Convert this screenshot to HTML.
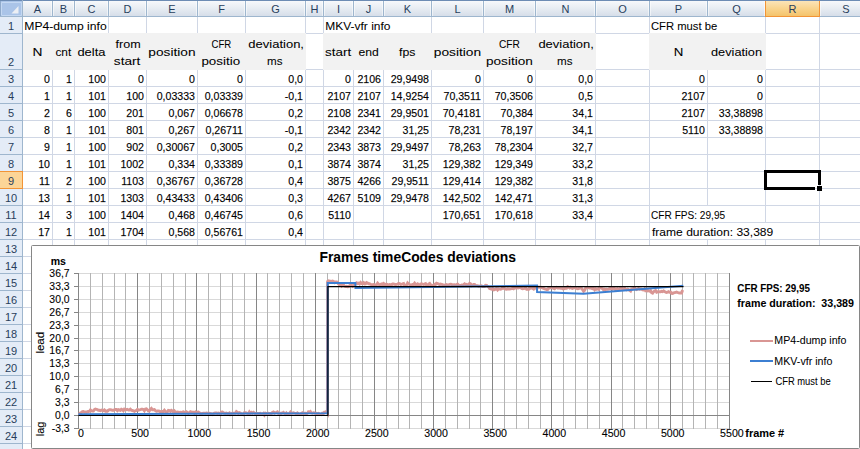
<!DOCTYPE html><html><head><meta charset="utf-8"><style>html,body{margin:0;padding:0;width:860px;height:449px;overflow:hidden;background:#fff}</style></head><body><svg width="860" height="449" viewBox="0 0 860 449" style="position:absolute;left:0;top:0"><defs><linearGradient id="ch" x1="0" y1="0" x2="0" y2="1"><stop offset="0" stop-color="#f9fafc"/><stop offset="0.5" stop-color="#e8edf3"/><stop offset="1" stop-color="#d6dee9"/></linearGradient><linearGradient id="chs" x1="0" y1="0" x2="0" y2="1"><stop offset="0" stop-color="#fbe4b8"/><stop offset="0.5" stop-color="#f9d48e"/><stop offset="1" stop-color="#f4c36b"/></linearGradient></defs><rect x="0" y="0" width="860" height="449" fill="#ffffff"/><rect x="22" y="34" width="283" height="36" fill="#f2f2f2"/><rect x="323" y="34" width="272" height="36" fill="#f2f2f2"/><rect x="649" y="34" width="116" height="36" fill="#f2f2f2"/><path d="M52.5 33V449M74.5 33V449M108.5 17V449M146.5 17V449M197.5 17V449M245.5 17V449M305.5 17V449M323.5 17V449M353.5 33V449M383.5 33V449M431.5 17V449M483.5 17V449M535.5 17V449M595.5 17V449M649.5 17V449M707.5 33V206M707.5 222V223M707.5 239V449M765.5 17V223M765.5 239V449M819.5 17V449M872.5 17V449M23 33.5H860M23 69.5H860M23 86.5H860M23 103.5H860M23 120.5H860M23 137.5H860M23 154.5H860M23 171.5H860M23 188.5H860M23 205.5H860M23 222.5H860M23 239.5H860M23 256.5H860M23 273.5H860M23 290.5H860M23 307.5H860M23 324.5H860M23 341.5H860M23 358.5H860M23 375.5H860M23 392.5H860M23 409.5H860M23 426.5H860M23 443.5H860M23 460.5H860M23 477.5H860" stroke="#d0d7e5" stroke-width="1" fill="none"/><rect x="23" y="33" width="283" height="37" fill="#f2f2f2"/><rect x="323" y="33" width="273" height="37" fill="#f2f2f2"/><rect x="649" y="33" width="117" height="37" fill="#f2f2f2"/><rect x="0" y="0" width="860" height="16" fill="url(#ch)"/><rect x="0" y="16" width="860" height="1" fill="#9eb6ce"/><path d="M52.5 1V16M74.5 1V16M108.5 1V16M146.5 1V16M197.5 1V16M245.5 1V16M305.5 1V16M323.5 1V16M353.5 1V16M383.5 1V16M431.5 1V16M483.5 1V16M535.5 1V16M595.5 1V16M649.5 1V16M707.5 1V16M765.5 1V16M819.5 1V16M872.5 1V16" stroke="#9eb6ce" stroke-width="1"/><path d="M51.5 1V16M53.5 1V16M73.5 1V16M75.5 1V16M107.5 1V16M109.5 1V16M145.5 1V16M147.5 1V16M196.5 1V16M198.5 1V16M244.5 1V16M246.5 1V16M304.5 1V16M306.5 1V16M322.5 1V16M324.5 1V16M352.5 1V16M354.5 1V16M382.5 1V16M384.5 1V16M430.5 1V16M432.5 1V16M482.5 1V16M484.5 1V16M534.5 1V16M536.5 1V16M594.5 1V16M596.5 1V16M648.5 1V16M650.5 1V16M706.5 1V16M708.5 1V16M764.5 1V16M766.5 1V16M818.5 1V16M820.5 1V16M871.5 1V16M873.5 1V16" stroke="#ffffff" stroke-opacity="0.55" stroke-width="1"/><rect x="765" y="1" width="55" height="16" fill="#f29436"/><rect x="766" y="1" width="53" height="15" fill="url(#chs)"/><rect x="0" y="0" width="860" height="1" fill="#6d8cb4"/><rect x="0" y="17" width="22" height="432" fill="#e4ecf7"/><rect x="22" y="0" width="1" height="449" fill="#9eb6ce"/><path d="M0 33.5H22M0 69.5H22M0 86.5H22M0 103.5H22M0 120.5H22M0 137.5H22M0 154.5H22M0 171.5H22M0 188.5H22M0 205.5H22M0 222.5H22M0 239.5H22M0 256.5H22M0 273.5H22M0 290.5H22M0 307.5H22M0 324.5H22M0 341.5H22M0 358.5H22M0 375.5H22M0 392.5H22M0 409.5H22M0 426.5H22M0 443.5H22M0 460.5H22M0 477.5H22" stroke="#9eb6ce" stroke-width="1"/><rect x="0" y="171" width="23" height="18" fill="#f29436"/><rect x="0" y="172" width="22" height="16" fill="#fcd597"/><rect x="0" y="1" width="22" height="15" fill="#aac4e8"/><path d="M1.5 15V2.5H21.5V15.5H1.5" fill="none" stroke="#c4d8f2" stroke-width="1"/><rect x="0" y="1" width="1" height="15" fill="#8faacb"/><path d="M18.5 6V13.5H11.5Z" fill="#eceff4"/><g font-family='"Liberation Sans", sans-serif'><text x="37.5" y="13" text-anchor="middle" font-size="11" font-weight="normal" fill="#283e5c" >A</text><text x="63.5" y="13" text-anchor="middle" font-size="11" font-weight="normal" fill="#283e5c" >B</text><text x="91.5" y="13" text-anchor="middle" font-size="11" font-weight="normal" fill="#283e5c" >C</text><text x="127.5" y="13" text-anchor="middle" font-size="11" font-weight="normal" fill="#283e5c" >D</text><text x="172.0" y="13" text-anchor="middle" font-size="11" font-weight="normal" fill="#283e5c" >E</text><text x="221.5" y="13" text-anchor="middle" font-size="11" font-weight="normal" fill="#283e5c" >F</text><text x="275.5" y="13" text-anchor="middle" font-size="11" font-weight="normal" fill="#283e5c" >G</text><text x="314.5" y="13" text-anchor="middle" font-size="11" font-weight="normal" fill="#283e5c" >H</text><text x="338.5" y="13" text-anchor="middle" font-size="11" font-weight="normal" fill="#283e5c" >I</text><text x="368.5" y="13" text-anchor="middle" font-size="11" font-weight="normal" fill="#283e5c" >J</text><text x="407.5" y="13" text-anchor="middle" font-size="11" font-weight="normal" fill="#283e5c" >K</text><text x="457.5" y="13" text-anchor="middle" font-size="11" font-weight="normal" fill="#283e5c" >L</text><text x="509.5" y="13" text-anchor="middle" font-size="11" font-weight="normal" fill="#283e5c" >M</text><text x="565.5" y="13" text-anchor="middle" font-size="11" font-weight="normal" fill="#283e5c" >N</text><text x="622.5" y="13" text-anchor="middle" font-size="11" font-weight="normal" fill="#283e5c" >O</text><text x="678.5" y="13" text-anchor="middle" font-size="11" font-weight="normal" fill="#283e5c" >P</text><text x="736.5" y="13" text-anchor="middle" font-size="11" font-weight="normal" fill="#283e5c" >Q</text><text x="792.5" y="13" text-anchor="middle" font-size="11" font-weight="normal" fill="#283e5c" >R</text><text x="846.0" y="13" text-anchor="middle" font-size="11" font-weight="normal" fill="#283e5c" >S</text><text x="11" y="30" text-anchor="middle" font-size="11" font-weight="normal" fill="#283e5c" >1</text><text x="11" y="66" text-anchor="middle" font-size="11" font-weight="normal" fill="#283e5c" >2</text><text x="11" y="83" text-anchor="middle" font-size="11" font-weight="normal" fill="#283e5c" >3</text><text x="11" y="100" text-anchor="middle" font-size="11" font-weight="normal" fill="#283e5c" >4</text><text x="11" y="117" text-anchor="middle" font-size="11" font-weight="normal" fill="#283e5c" >5</text><text x="11" y="134" text-anchor="middle" font-size="11" font-weight="normal" fill="#283e5c" >6</text><text x="11" y="151" text-anchor="middle" font-size="11" font-weight="normal" fill="#283e5c" >7</text><text x="11" y="168" text-anchor="middle" font-size="11" font-weight="normal" fill="#283e5c" >8</text><text x="11" y="185" text-anchor="middle" font-size="11" font-weight="normal" fill="#283e5c" >9</text><text x="11" y="202" text-anchor="middle" font-size="11" font-weight="normal" fill="#283e5c" >10</text><text x="11" y="219" text-anchor="middle" font-size="11" font-weight="normal" fill="#283e5c" >11</text><text x="11" y="236" text-anchor="middle" font-size="11" font-weight="normal" fill="#283e5c" >12</text><text x="11" y="253" text-anchor="middle" font-size="11" font-weight="normal" fill="#283e5c" >13</text><text x="11" y="270" text-anchor="middle" font-size="11" font-weight="normal" fill="#283e5c" >14</text><text x="11" y="287" text-anchor="middle" font-size="11" font-weight="normal" fill="#283e5c" >15</text><text x="11" y="304" text-anchor="middle" font-size="11" font-weight="normal" fill="#283e5c" >16</text><text x="11" y="321" text-anchor="middle" font-size="11" font-weight="normal" fill="#283e5c" >17</text><text x="11" y="338" text-anchor="middle" font-size="11" font-weight="normal" fill="#283e5c" >18</text><text x="11" y="355" text-anchor="middle" font-size="11" font-weight="normal" fill="#283e5c" >19</text><text x="11" y="372" text-anchor="middle" font-size="11" font-weight="normal" fill="#283e5c" >20</text><text x="11" y="389" text-anchor="middle" font-size="11" font-weight="normal" fill="#283e5c" >21</text><text x="11" y="406" text-anchor="middle" font-size="11" font-weight="normal" fill="#283e5c" >22</text><text x="11" y="423" text-anchor="middle" font-size="11" font-weight="normal" fill="#283e5c" >23</text><text x="11" y="440" text-anchor="middle" font-size="11" font-weight="normal" fill="#283e5c" >24</text><text x="11" y="457" text-anchor="middle" font-size="11" font-weight="normal" fill="#283e5c" >25</text></g><g font-family='"Liberation Sans", sans-serif' stroke="#000" stroke-width="0.25" stroke-opacity="0.6"><text x="24.30" y="30" text-anchor="start" font-size="11" font-weight="normal" fill="#000" stroke-width="0.1" textLength="82.36" lengthAdjust="spacingAndGlyphs" xml:space="preserve">MP4-dump info</text><text x="325.31" y="30" text-anchor="start" font-size="11" font-weight="normal" fill="#000" stroke-width="0.1" textLength="65.19" lengthAdjust="spacingAndGlyphs" xml:space="preserve">MKV-vfr info</text><text x="650.98" y="30" text-anchor="start" font-size="11" font-weight="normal" fill="#000" stroke-width="0.1" textLength="66.21" lengthAdjust="spacingAndGlyphs" xml:space="preserve">CFR must be</text><text x="37.47" y="56" text-anchor="middle" font-size="11" font-weight="normal" fill="#000" stroke-width="0.1" textLength="9.94" lengthAdjust="spacingAndGlyphs" xml:space="preserve">N</text><text x="63.33" y="56" text-anchor="middle" font-size="11" font-weight="normal" fill="#000" stroke-width="0.1" textLength="15.86" lengthAdjust="spacingAndGlyphs" xml:space="preserve">cnt</text><text x="91.42" y="56" text-anchor="middle" font-size="11" font-weight="normal" fill="#000" stroke-width="0.1" textLength="28.03" lengthAdjust="spacingAndGlyphs" xml:space="preserve">delta</text><text x="128.07" y="47.6" text-anchor="middle" font-size="11" font-weight="normal" fill="#000" stroke-width="0.1" textLength="25.14" lengthAdjust="spacingAndGlyphs" xml:space="preserve">from</text><text x="127.13" y="64.8" text-anchor="middle" font-size="11" font-weight="normal" fill="#000" stroke-width="0.1" textLength="26.54" lengthAdjust="spacingAndGlyphs" xml:space="preserve">start</text><text x="171.95" y="56" text-anchor="middle" font-size="11" font-weight="normal" fill="#000" stroke-width="0.1" textLength="47.19" lengthAdjust="spacingAndGlyphs" xml:space="preserve">position</text><text x="221.33" y="47.6" text-anchor="middle" font-size="11" font-weight="normal" fill="#000" stroke-width="0.1" textLength="19.70" lengthAdjust="spacingAndGlyphs" xml:space="preserve">CFR</text><text x="220.77" y="64.8" text-anchor="middle" font-size="11" font-weight="normal" fill="#000" stroke-width="0.1" textLength="38.67" lengthAdjust="spacingAndGlyphs" xml:space="preserve">positio</text><text x="276.15" y="47.6" text-anchor="middle" font-size="11" font-weight="normal" fill="#000" stroke-width="0.1" textLength="55.69" lengthAdjust="spacingAndGlyphs" xml:space="preserve">deviation,</text><text x="274.80" y="64.8" text-anchor="middle" font-size="11" font-weight="normal" fill="#000" stroke-width="0.1" textLength="15.51" lengthAdjust="spacingAndGlyphs" xml:space="preserve">ms</text><text x="338.14" y="56" text-anchor="middle" font-size="11" font-weight="normal" fill="#000" stroke-width="0.1" textLength="26.12" lengthAdjust="spacingAndGlyphs" xml:space="preserve">start</text><text x="368.70" y="56" text-anchor="middle" font-size="11" font-weight="normal" fill="#000" stroke-width="0.1" textLength="20.30" lengthAdjust="spacingAndGlyphs" xml:space="preserve">end</text><text x="407.32" y="56" text-anchor="middle" font-size="11" font-weight="normal" fill="#000" stroke-width="0.1" textLength="16.45" lengthAdjust="spacingAndGlyphs" xml:space="preserve">fps</text><text x="457.45" y="56" text-anchor="middle" font-size="11" font-weight="normal" fill="#000" stroke-width="0.1" textLength="47.40" lengthAdjust="spacingAndGlyphs" xml:space="preserve">position</text><text x="509.32" y="47.6" text-anchor="middle" font-size="11" font-weight="normal" fill="#000" stroke-width="0.1" textLength="20.89" lengthAdjust="spacingAndGlyphs" xml:space="preserve">CFR</text><text x="509.45" y="64.8" text-anchor="middle" font-size="11" font-weight="normal" fill="#000" stroke-width="0.1" textLength="46.88" lengthAdjust="spacingAndGlyphs" xml:space="preserve">position</text><text x="566.14" y="47.6" text-anchor="middle" font-size="11" font-weight="normal" fill="#000" stroke-width="0.1" textLength="55.49" lengthAdjust="spacingAndGlyphs" xml:space="preserve">deviation,</text><text x="564.80" y="64.8" text-anchor="middle" font-size="11" font-weight="normal" fill="#000" stroke-width="0.1" textLength="15.51" lengthAdjust="spacingAndGlyphs" xml:space="preserve">ms</text><text x="678.47" y="56" text-anchor="middle" font-size="11" font-weight="normal" fill="#000" stroke-width="0.1" textLength="9.61" lengthAdjust="spacingAndGlyphs" xml:space="preserve">N</text><text x="736.53" y="56" text-anchor="middle" font-size="11" font-weight="normal" fill="#000" stroke-width="0.1" textLength="51.05" lengthAdjust="spacingAndGlyphs" xml:space="preserve">deviation</text><text x="50.00" y="83" text-anchor="end" font-size="11" font-weight="normal" fill="#000" textLength="5.90" lengthAdjust="spacingAndGlyphs" xml:space="preserve">0</text><text x="50.00" y="100" text-anchor="end" font-size="11" font-weight="normal" fill="#000" textLength="5.90" lengthAdjust="spacingAndGlyphs" xml:space="preserve">1</text><text x="50.00" y="117" text-anchor="end" font-size="11" font-weight="normal" fill="#000" textLength="5.90" lengthAdjust="spacingAndGlyphs" xml:space="preserve">2</text><text x="50.00" y="134" text-anchor="end" font-size="11" font-weight="normal" fill="#000" textLength="5.90" lengthAdjust="spacingAndGlyphs" xml:space="preserve">8</text><text x="50.00" y="151" text-anchor="end" font-size="11" font-weight="normal" fill="#000" textLength="5.90" lengthAdjust="spacingAndGlyphs" xml:space="preserve">9</text><text x="50.00" y="168" text-anchor="end" font-size="11" font-weight="normal" fill="#000" textLength="11.80" lengthAdjust="spacingAndGlyphs" xml:space="preserve">10</text><text x="50.00" y="185" text-anchor="end" font-size="11" font-weight="normal" fill="#000" textLength="11.00" lengthAdjust="spacingAndGlyphs" xml:space="preserve">11</text><text x="50.00" y="202" text-anchor="end" font-size="11" font-weight="normal" fill="#000" textLength="11.80" lengthAdjust="spacingAndGlyphs" xml:space="preserve">13</text><text x="50.00" y="219" text-anchor="end" font-size="11" font-weight="normal" fill="#000" textLength="11.80" lengthAdjust="spacingAndGlyphs" xml:space="preserve">14</text><text x="50.00" y="236" text-anchor="end" font-size="11" font-weight="normal" fill="#000" textLength="11.80" lengthAdjust="spacingAndGlyphs" xml:space="preserve">17</text><text x="72.00" y="83" text-anchor="end" font-size="11" font-weight="normal" fill="#000" textLength="5.90" lengthAdjust="spacingAndGlyphs" xml:space="preserve">1</text><text x="72.00" y="100" text-anchor="end" font-size="11" font-weight="normal" fill="#000" textLength="5.90" lengthAdjust="spacingAndGlyphs" xml:space="preserve">1</text><text x="72.00" y="117" text-anchor="end" font-size="11" font-weight="normal" fill="#000" textLength="5.90" lengthAdjust="spacingAndGlyphs" xml:space="preserve">6</text><text x="72.00" y="134" text-anchor="end" font-size="11" font-weight="normal" fill="#000" textLength="5.90" lengthAdjust="spacingAndGlyphs" xml:space="preserve">1</text><text x="72.00" y="151" text-anchor="end" font-size="11" font-weight="normal" fill="#000" textLength="5.90" lengthAdjust="spacingAndGlyphs" xml:space="preserve">1</text><text x="72.00" y="168" text-anchor="end" font-size="11" font-weight="normal" fill="#000" textLength="5.90" lengthAdjust="spacingAndGlyphs" xml:space="preserve">1</text><text x="72.00" y="185" text-anchor="end" font-size="11" font-weight="normal" fill="#000" textLength="5.90" lengthAdjust="spacingAndGlyphs" xml:space="preserve">2</text><text x="72.00" y="202" text-anchor="end" font-size="11" font-weight="normal" fill="#000" textLength="5.90" lengthAdjust="spacingAndGlyphs" xml:space="preserve">1</text><text x="72.00" y="219" text-anchor="end" font-size="11" font-weight="normal" fill="#000" textLength="5.90" lengthAdjust="spacingAndGlyphs" xml:space="preserve">3</text><text x="72.00" y="236" text-anchor="end" font-size="11" font-weight="normal" fill="#000" textLength="5.90" lengthAdjust="spacingAndGlyphs" xml:space="preserve">1</text><text x="106.00" y="83" text-anchor="end" font-size="11" font-weight="normal" fill="#000" textLength="17.68" lengthAdjust="spacingAndGlyphs" xml:space="preserve">100</text><text x="106.00" y="100" text-anchor="end" font-size="11" font-weight="normal" fill="#000" textLength="17.68" lengthAdjust="spacingAndGlyphs" xml:space="preserve">101</text><text x="106.00" y="117" text-anchor="end" font-size="11" font-weight="normal" fill="#000" textLength="17.68" lengthAdjust="spacingAndGlyphs" xml:space="preserve">100</text><text x="106.00" y="134" text-anchor="end" font-size="11" font-weight="normal" fill="#000" textLength="17.68" lengthAdjust="spacingAndGlyphs" xml:space="preserve">101</text><text x="106.00" y="151" text-anchor="end" font-size="11" font-weight="normal" fill="#000" textLength="17.68" lengthAdjust="spacingAndGlyphs" xml:space="preserve">100</text><text x="106.00" y="168" text-anchor="end" font-size="11" font-weight="normal" fill="#000" textLength="17.68" lengthAdjust="spacingAndGlyphs" xml:space="preserve">101</text><text x="106.00" y="185" text-anchor="end" font-size="11" font-weight="normal" fill="#000" textLength="17.68" lengthAdjust="spacingAndGlyphs" xml:space="preserve">100</text><text x="106.00" y="202" text-anchor="end" font-size="11" font-weight="normal" fill="#000" textLength="17.68" lengthAdjust="spacingAndGlyphs" xml:space="preserve">101</text><text x="106.00" y="219" text-anchor="end" font-size="11" font-weight="normal" fill="#000" textLength="17.68" lengthAdjust="spacingAndGlyphs" xml:space="preserve">100</text><text x="106.00" y="236" text-anchor="end" font-size="11" font-weight="normal" fill="#000" textLength="17.68" lengthAdjust="spacingAndGlyphs" xml:space="preserve">101</text><text x="144.00" y="83" text-anchor="end" font-size="11" font-weight="normal" fill="#000" textLength="5.90" lengthAdjust="spacingAndGlyphs" xml:space="preserve">0</text><text x="144.00" y="100" text-anchor="end" font-size="11" font-weight="normal" fill="#000" textLength="17.68" lengthAdjust="spacingAndGlyphs" xml:space="preserve">100</text><text x="144.00" y="117" text-anchor="end" font-size="11" font-weight="normal" fill="#000" textLength="17.68" lengthAdjust="spacingAndGlyphs" xml:space="preserve">201</text><text x="144.00" y="134" text-anchor="end" font-size="11" font-weight="normal" fill="#000" textLength="17.68" lengthAdjust="spacingAndGlyphs" xml:space="preserve">801</text><text x="144.00" y="151" text-anchor="end" font-size="11" font-weight="normal" fill="#000" textLength="17.68" lengthAdjust="spacingAndGlyphs" xml:space="preserve">902</text><text x="144.00" y="168" text-anchor="end" font-size="11" font-weight="normal" fill="#000" textLength="23.58" lengthAdjust="spacingAndGlyphs" xml:space="preserve">1002</text><text x="144.00" y="185" text-anchor="end" font-size="11" font-weight="normal" fill="#000" textLength="22.78" lengthAdjust="spacingAndGlyphs" xml:space="preserve">1103</text><text x="144.00" y="202" text-anchor="end" font-size="11" font-weight="normal" fill="#000" textLength="23.58" lengthAdjust="spacingAndGlyphs" xml:space="preserve">1303</text><text x="144.00" y="219" text-anchor="end" font-size="11" font-weight="normal" fill="#000" textLength="23.58" lengthAdjust="spacingAndGlyphs" xml:space="preserve">1404</text><text x="144.00" y="236" text-anchor="end" font-size="11" font-weight="normal" fill="#000" textLength="23.58" lengthAdjust="spacingAndGlyphs" xml:space="preserve">1704</text><text x="195.00" y="83" text-anchor="end" font-size="11" font-weight="normal" fill="#000" textLength="5.90" lengthAdjust="spacingAndGlyphs" xml:space="preserve">0</text><text x="195.00" y="100" text-anchor="end" font-size="11" font-weight="normal" fill="#000" textLength="38.29" lengthAdjust="spacingAndGlyphs" xml:space="preserve">0,03333</text><text x="195.00" y="117" text-anchor="end" font-size="11" font-weight="normal" fill="#000" textLength="26.51" lengthAdjust="spacingAndGlyphs" xml:space="preserve">0,067</text><text x="195.00" y="134" text-anchor="end" font-size="11" font-weight="normal" fill="#000" textLength="26.51" lengthAdjust="spacingAndGlyphs" xml:space="preserve">0,267</text><text x="195.00" y="151" text-anchor="end" font-size="11" font-weight="normal" fill="#000" textLength="38.29" lengthAdjust="spacingAndGlyphs" xml:space="preserve">0,30067</text><text x="195.00" y="168" text-anchor="end" font-size="11" font-weight="normal" fill="#000" textLength="26.51" lengthAdjust="spacingAndGlyphs" xml:space="preserve">0,334</text><text x="195.00" y="185" text-anchor="end" font-size="11" font-weight="normal" fill="#000" textLength="38.29" lengthAdjust="spacingAndGlyphs" xml:space="preserve">0,36767</text><text x="195.00" y="202" text-anchor="end" font-size="11" font-weight="normal" fill="#000" textLength="38.29" lengthAdjust="spacingAndGlyphs" xml:space="preserve">0,43433</text><text x="195.00" y="219" text-anchor="end" font-size="11" font-weight="normal" fill="#000" textLength="26.51" lengthAdjust="spacingAndGlyphs" xml:space="preserve">0,468</text><text x="195.00" y="236" text-anchor="end" font-size="11" font-weight="normal" fill="#000" textLength="26.51" lengthAdjust="spacingAndGlyphs" xml:space="preserve">0,568</text><text x="243.00" y="83" text-anchor="end" font-size="11" font-weight="normal" fill="#000" textLength="5.90" lengthAdjust="spacingAndGlyphs" xml:space="preserve">0</text><text x="243.00" y="100" text-anchor="end" font-size="11" font-weight="normal" fill="#000" textLength="38.29" lengthAdjust="spacingAndGlyphs" xml:space="preserve">0,03339</text><text x="243.00" y="117" text-anchor="end" font-size="11" font-weight="normal" fill="#000" textLength="38.29" lengthAdjust="spacingAndGlyphs" xml:space="preserve">0,06678</text><text x="243.00" y="134" text-anchor="end" font-size="11" font-weight="normal" fill="#000" textLength="37.51" lengthAdjust="spacingAndGlyphs" xml:space="preserve">0,26711</text><text x="243.00" y="151" text-anchor="end" font-size="11" font-weight="normal" fill="#000" textLength="32.41" lengthAdjust="spacingAndGlyphs" xml:space="preserve">0,3005</text><text x="243.00" y="168" text-anchor="end" font-size="11" font-weight="normal" fill="#000" textLength="38.29" lengthAdjust="spacingAndGlyphs" xml:space="preserve">0,33389</text><text x="243.00" y="185" text-anchor="end" font-size="11" font-weight="normal" fill="#000" textLength="38.29" lengthAdjust="spacingAndGlyphs" xml:space="preserve">0,36728</text><text x="243.00" y="202" text-anchor="end" font-size="11" font-weight="normal" fill="#000" textLength="38.29" lengthAdjust="spacingAndGlyphs" xml:space="preserve">0,43406</text><text x="243.00" y="219" text-anchor="end" font-size="11" font-weight="normal" fill="#000" textLength="38.29" lengthAdjust="spacingAndGlyphs" xml:space="preserve">0,46745</text><text x="243.00" y="236" text-anchor="end" font-size="11" font-weight="normal" fill="#000" textLength="38.29" lengthAdjust="spacingAndGlyphs" xml:space="preserve">0,56761</text><text x="303.00" y="83" text-anchor="end" font-size="11" font-weight="normal" fill="#000" textLength="14.73" lengthAdjust="spacingAndGlyphs" xml:space="preserve">0,0</text><text x="303.00" y="100" text-anchor="end" font-size="11" font-weight="normal" fill="#000" textLength="18.27" lengthAdjust="spacingAndGlyphs" xml:space="preserve">-0,1</text><text x="303.00" y="117" text-anchor="end" font-size="11" font-weight="normal" fill="#000" textLength="14.73" lengthAdjust="spacingAndGlyphs" xml:space="preserve">0,2</text><text x="303.00" y="134" text-anchor="end" font-size="11" font-weight="normal" fill="#000" textLength="18.27" lengthAdjust="spacingAndGlyphs" xml:space="preserve">-0,1</text><text x="303.00" y="151" text-anchor="end" font-size="11" font-weight="normal" fill="#000" textLength="14.73" lengthAdjust="spacingAndGlyphs" xml:space="preserve">0,2</text><text x="303.00" y="168" text-anchor="end" font-size="11" font-weight="normal" fill="#000" textLength="14.73" lengthAdjust="spacingAndGlyphs" xml:space="preserve">0,1</text><text x="303.00" y="185" text-anchor="end" font-size="11" font-weight="normal" fill="#000" textLength="14.73" lengthAdjust="spacingAndGlyphs" xml:space="preserve">0,4</text><text x="303.00" y="202" text-anchor="end" font-size="11" font-weight="normal" fill="#000" textLength="14.73" lengthAdjust="spacingAndGlyphs" xml:space="preserve">0,3</text><text x="303.00" y="219" text-anchor="end" font-size="11" font-weight="normal" fill="#000" textLength="14.73" lengthAdjust="spacingAndGlyphs" xml:space="preserve">0,6</text><text x="303.00" y="236" text-anchor="end" font-size="11" font-weight="normal" fill="#000" textLength="14.73" lengthAdjust="spacingAndGlyphs" xml:space="preserve">0,4</text><text x="351.00" y="83" text-anchor="end" font-size="11" font-weight="normal" fill="#000" textLength="5.90" lengthAdjust="spacingAndGlyphs" xml:space="preserve">0</text><text x="351.00" y="100" text-anchor="end" font-size="11" font-weight="normal" fill="#000" textLength="23.58" lengthAdjust="spacingAndGlyphs" xml:space="preserve">2107</text><text x="351.00" y="117" text-anchor="end" font-size="11" font-weight="normal" fill="#000" textLength="23.58" lengthAdjust="spacingAndGlyphs" xml:space="preserve">2108</text><text x="351.00" y="134" text-anchor="end" font-size="11" font-weight="normal" fill="#000" textLength="23.58" lengthAdjust="spacingAndGlyphs" xml:space="preserve">2342</text><text x="351.00" y="151" text-anchor="end" font-size="11" font-weight="normal" fill="#000" textLength="23.58" lengthAdjust="spacingAndGlyphs" xml:space="preserve">2343</text><text x="351.00" y="168" text-anchor="end" font-size="11" font-weight="normal" fill="#000" textLength="23.58" lengthAdjust="spacingAndGlyphs" xml:space="preserve">3874</text><text x="351.00" y="185" text-anchor="end" font-size="11" font-weight="normal" fill="#000" textLength="23.58" lengthAdjust="spacingAndGlyphs" xml:space="preserve">3875</text><text x="351.00" y="202" text-anchor="end" font-size="11" font-weight="normal" fill="#000" textLength="23.58" lengthAdjust="spacingAndGlyphs" xml:space="preserve">4267</text><text x="351.00" y="219" text-anchor="end" font-size="11" font-weight="normal" fill="#000" textLength="22.78" lengthAdjust="spacingAndGlyphs" xml:space="preserve">5110</text><text x="381.00" y="83" text-anchor="end" font-size="11" font-weight="normal" fill="#000" textLength="23.58" lengthAdjust="spacingAndGlyphs" xml:space="preserve">2106</text><text x="381.00" y="100" text-anchor="end" font-size="11" font-weight="normal" fill="#000" textLength="23.58" lengthAdjust="spacingAndGlyphs" xml:space="preserve">2107</text><text x="381.00" y="117" text-anchor="end" font-size="11" font-weight="normal" fill="#000" textLength="23.58" lengthAdjust="spacingAndGlyphs" xml:space="preserve">2341</text><text x="381.00" y="134" text-anchor="end" font-size="11" font-weight="normal" fill="#000" textLength="23.58" lengthAdjust="spacingAndGlyphs" xml:space="preserve">2342</text><text x="381.00" y="151" text-anchor="end" font-size="11" font-weight="normal" fill="#000" textLength="23.58" lengthAdjust="spacingAndGlyphs" xml:space="preserve">3873</text><text x="381.00" y="168" text-anchor="end" font-size="11" font-weight="normal" fill="#000" textLength="23.58" lengthAdjust="spacingAndGlyphs" xml:space="preserve">3874</text><text x="381.00" y="185" text-anchor="end" font-size="11" font-weight="normal" fill="#000" textLength="23.58" lengthAdjust="spacingAndGlyphs" xml:space="preserve">4266</text><text x="381.00" y="202" text-anchor="end" font-size="11" font-weight="normal" fill="#000" textLength="23.58" lengthAdjust="spacingAndGlyphs" xml:space="preserve">5109</text><text x="429.00" y="83" text-anchor="end" font-size="11" font-weight="normal" fill="#000" textLength="38.29" lengthAdjust="spacingAndGlyphs" xml:space="preserve">29,9498</text><text x="429.00" y="100" text-anchor="end" font-size="11" font-weight="normal" fill="#000" textLength="38.29" lengthAdjust="spacingAndGlyphs" xml:space="preserve">14,9254</text><text x="429.00" y="117" text-anchor="end" font-size="11" font-weight="normal" fill="#000" textLength="38.29" lengthAdjust="spacingAndGlyphs" xml:space="preserve">29,9501</text><text x="429.00" y="134" text-anchor="end" font-size="11" font-weight="normal" fill="#000" textLength="26.51" lengthAdjust="spacingAndGlyphs" xml:space="preserve">31,25</text><text x="429.00" y="151" text-anchor="end" font-size="11" font-weight="normal" fill="#000" textLength="38.29" lengthAdjust="spacingAndGlyphs" xml:space="preserve">29,9497</text><text x="429.00" y="168" text-anchor="end" font-size="11" font-weight="normal" fill="#000" textLength="26.51" lengthAdjust="spacingAndGlyphs" xml:space="preserve">31,25</text><text x="429.00" y="185" text-anchor="end" font-size="11" font-weight="normal" fill="#000" textLength="37.51" lengthAdjust="spacingAndGlyphs" xml:space="preserve">29,9511</text><text x="429.00" y="202" text-anchor="end" font-size="11" font-weight="normal" fill="#000" textLength="38.29" lengthAdjust="spacingAndGlyphs" xml:space="preserve">29,9478</text><text x="481.00" y="83" text-anchor="end" font-size="11" font-weight="normal" fill="#000" textLength="5.90" lengthAdjust="spacingAndGlyphs" xml:space="preserve">0</text><text x="481.00" y="100" text-anchor="end" font-size="11" font-weight="normal" fill="#000" textLength="37.51" lengthAdjust="spacingAndGlyphs" xml:space="preserve">70,3511</text><text x="481.00" y="117" text-anchor="end" font-size="11" font-weight="normal" fill="#000" textLength="38.29" lengthAdjust="spacingAndGlyphs" xml:space="preserve">70,4181</text><text x="481.00" y="134" text-anchor="end" font-size="11" font-weight="normal" fill="#000" textLength="32.41" lengthAdjust="spacingAndGlyphs" xml:space="preserve">78,231</text><text x="481.00" y="151" text-anchor="end" font-size="11" font-weight="normal" fill="#000" textLength="32.41" lengthAdjust="spacingAndGlyphs" xml:space="preserve">78,263</text><text x="481.00" y="168" text-anchor="end" font-size="11" font-weight="normal" fill="#000" textLength="38.29" lengthAdjust="spacingAndGlyphs" xml:space="preserve">129,382</text><text x="481.00" y="185" text-anchor="end" font-size="11" font-weight="normal" fill="#000" textLength="38.29" lengthAdjust="spacingAndGlyphs" xml:space="preserve">129,414</text><text x="481.00" y="202" text-anchor="end" font-size="11" font-weight="normal" fill="#000" textLength="38.29" lengthAdjust="spacingAndGlyphs" xml:space="preserve">142,502</text><text x="481.00" y="219" text-anchor="end" font-size="11" font-weight="normal" fill="#000" textLength="38.29" lengthAdjust="spacingAndGlyphs" xml:space="preserve">170,651</text><text x="533.00" y="83" text-anchor="end" font-size="11" font-weight="normal" fill="#000" textLength="5.90" lengthAdjust="spacingAndGlyphs" xml:space="preserve">0</text><text x="533.00" y="100" text-anchor="end" font-size="11" font-weight="normal" fill="#000" textLength="38.29" lengthAdjust="spacingAndGlyphs" xml:space="preserve">70,3506</text><text x="533.00" y="117" text-anchor="end" font-size="11" font-weight="normal" fill="#000" textLength="32.41" lengthAdjust="spacingAndGlyphs" xml:space="preserve">70,384</text><text x="533.00" y="134" text-anchor="end" font-size="11" font-weight="normal" fill="#000" textLength="32.41" lengthAdjust="spacingAndGlyphs" xml:space="preserve">78,197</text><text x="533.00" y="151" text-anchor="end" font-size="11" font-weight="normal" fill="#000" textLength="38.29" lengthAdjust="spacingAndGlyphs" xml:space="preserve">78,2304</text><text x="533.00" y="168" text-anchor="end" font-size="11" font-weight="normal" fill="#000" textLength="38.29" lengthAdjust="spacingAndGlyphs" xml:space="preserve">129,349</text><text x="533.00" y="185" text-anchor="end" font-size="11" font-weight="normal" fill="#000" textLength="38.29" lengthAdjust="spacingAndGlyphs" xml:space="preserve">129,382</text><text x="533.00" y="202" text-anchor="end" font-size="11" font-weight="normal" fill="#000" textLength="38.29" lengthAdjust="spacingAndGlyphs" xml:space="preserve">142,471</text><text x="533.00" y="219" text-anchor="end" font-size="11" font-weight="normal" fill="#000" textLength="38.29" lengthAdjust="spacingAndGlyphs" xml:space="preserve">170,618</text><text x="593.00" y="83" text-anchor="end" font-size="11" font-weight="normal" fill="#000" textLength="14.73" lengthAdjust="spacingAndGlyphs" xml:space="preserve">0,0</text><text x="593.00" y="100" text-anchor="end" font-size="11" font-weight="normal" fill="#000" textLength="14.73" lengthAdjust="spacingAndGlyphs" xml:space="preserve">0,5</text><text x="593.00" y="117" text-anchor="end" font-size="11" font-weight="normal" fill="#000" textLength="20.63" lengthAdjust="spacingAndGlyphs" xml:space="preserve">34,1</text><text x="593.00" y="134" text-anchor="end" font-size="11" font-weight="normal" fill="#000" textLength="20.63" lengthAdjust="spacingAndGlyphs" xml:space="preserve">34,1</text><text x="593.00" y="151" text-anchor="end" font-size="11" font-weight="normal" fill="#000" textLength="20.63" lengthAdjust="spacingAndGlyphs" xml:space="preserve">32,7</text><text x="593.00" y="168" text-anchor="end" font-size="11" font-weight="normal" fill="#000" textLength="20.63" lengthAdjust="spacingAndGlyphs" xml:space="preserve">33,2</text><text x="593.00" y="185" text-anchor="end" font-size="11" font-weight="normal" fill="#000" textLength="20.63" lengthAdjust="spacingAndGlyphs" xml:space="preserve">31,8</text><text x="593.00" y="202" text-anchor="end" font-size="11" font-weight="normal" fill="#000" textLength="20.63" lengthAdjust="spacingAndGlyphs" xml:space="preserve">31,3</text><text x="593.00" y="219" text-anchor="end" font-size="11" font-weight="normal" fill="#000" textLength="20.63" lengthAdjust="spacingAndGlyphs" xml:space="preserve">33,4</text><text x="705.00" y="83" text-anchor="end" font-size="11" font-weight="normal" fill="#000" textLength="5.90" lengthAdjust="spacingAndGlyphs" xml:space="preserve">0</text><text x="705.00" y="100" text-anchor="end" font-size="11" font-weight="normal" fill="#000" textLength="23.58" lengthAdjust="spacingAndGlyphs" xml:space="preserve">2107</text><text x="705.00" y="117" text-anchor="end" font-size="11" font-weight="normal" fill="#000" textLength="23.58" lengthAdjust="spacingAndGlyphs" xml:space="preserve">2107</text><text x="705.00" y="134" text-anchor="end" font-size="11" font-weight="normal" fill="#000" textLength="22.78" lengthAdjust="spacingAndGlyphs" xml:space="preserve">5110</text><text x="763.00" y="83" text-anchor="end" font-size="11" font-weight="normal" fill="#000" textLength="5.90" lengthAdjust="spacingAndGlyphs" xml:space="preserve">0</text><text x="763.00" y="100" text-anchor="end" font-size="11" font-weight="normal" fill="#000" textLength="5.90" lengthAdjust="spacingAndGlyphs" xml:space="preserve">0</text><text x="763.00" y="117" text-anchor="end" font-size="11" font-weight="normal" fill="#000" textLength="44.19" lengthAdjust="spacingAndGlyphs" xml:space="preserve">33,38898</text><text x="763.00" y="134" text-anchor="end" font-size="11" font-weight="normal" fill="#000" textLength="44.19" lengthAdjust="spacingAndGlyphs" xml:space="preserve">33,38898</text><text x="651.08" y="219" text-anchor="start" font-size="11" font-weight="normal" fill="#000" stroke-width="0.1" textLength="74.06" lengthAdjust="spacingAndGlyphs" xml:space="preserve">CFR FPS: 29,95</text><text x="652.00" y="236" text-anchor="start" font-size="11" font-weight="normal" fill="#000" stroke-width="0.1" textLength="121.25" lengthAdjust="spacingAndGlyphs" xml:space="preserve">frame duration: 33,389</text></g><path d="M764 170H821V185M818 189H764Z" fill="none"/><rect x="764" y="170" width="57" height="3" fill="#000"/><rect x="764" y="170" width="3" height="20" fill="#000"/><rect x="818" y="170" width="3" height="15" fill="#000"/><rect x="764" y="187" width="51" height="3" fill="#000"/><rect x="817" y="186" width="5" height="5" fill="#000"/><rect x="31.5" y="245.5" width="828" height="203" rx="1" fill="#fff" stroke="#868686" stroke-width="1"/><path d="M78 273.5H730M78 286.5H730M78 299.5H730M78 312.5H730M78 325.5H730M78 338.5H730M78 350.5H730M78 363.5H730M78 376.5H730M78 389.5H730M78 402.5H730M78 415.5H730M78 428.5H730" stroke="#d9d9d9" stroke-width="1"/><path d="M90.5 273V429M102.5 273V429M114.5 273V429M125.5 273V429M149.5 273V429M161.5 273V429M173.5 273V429M185.5 273V429M208.5 273V429M220.5 273V429M232.5 273V429M244.5 273V429M267.5 273V429M279.5 273V429M291.5 273V429M303.5 273V429M327.5 273V429M338.5 273V429M350.5 273V429M362.5 273V429M386.5 273V429M398.5 273V429M409.5 273V429M421.5 273V429M445.5 273V429M457.5 273V429M469.5 273V429M480.5 273V429M504.5 273V429M516.5 273V429M528.5 273V429M540.5 273V429M563.5 273V429M575.5 273V429M587.5 273V429M599.5 273V429M622.5 273V429M634.5 273V429M646.5 273V429M658.5 273V429M682.5 273V429M693.5 273V429M705.5 273V429M717.5 273V429" stroke="#b4b4b4" stroke-width="1"/><path d="M137.5 273V429M196.5 273V429M256.5 273V429M315.5 273V429M374.5 273V429M433.5 273V429M492.5 273V429M551.5 273V429M611.5 273V429M670.5 273V429M729.5 273V429" stroke="#868686" stroke-width="1"/><path d="M74 415.5H730" stroke="#868686" stroke-width="1"/><path d="M74 273.5H78M74 286.5H78M74 299.5H78M74 312.5H78M74 325.5H78M74 338.5H78M74 350.5H78M74 363.5H78M74 376.5H78M74 389.5H78M74 402.5H78M74 415.5H78M74 428.5H78M78.5 273V429" stroke="#868686" stroke-width="1"/><g font-family='"Liberation Sans", sans-serif' stroke="#000" stroke-width="0.2" stroke-opacity="0.5"><text x="417.71" y="261.8" text-anchor="middle" font-size="14" font-weight="bold" fill="#000" stroke-width="0.1" textLength="196.39" lengthAdjust="spacingAndGlyphs" xml:space="preserve">Frames timeCodes deviations</text><text x="58.27" y="264.6" text-anchor="middle" font-size="11" font-weight="bold" fill="#000" stroke-width="0.1" textLength="15.27" lengthAdjust="spacingAndGlyphs" xml:space="preserve">ms</text><text x="69.60" y="277.3" text-anchor="end" font-size="10" font-weight="normal" fill="#000" textLength="20.25" lengthAdjust="spacingAndGlyphs" xml:space="preserve">36,7</text><text x="69.60" y="290.3" text-anchor="end" font-size="10" font-weight="normal" fill="#000" textLength="20.25" lengthAdjust="spacingAndGlyphs" xml:space="preserve">33,3</text><text x="69.60" y="303.3" text-anchor="end" font-size="10" font-weight="normal" fill="#000" textLength="20.25" lengthAdjust="spacingAndGlyphs" xml:space="preserve">30,0</text><text x="69.60" y="316.3" text-anchor="end" font-size="10" font-weight="normal" fill="#000" textLength="20.25" lengthAdjust="spacingAndGlyphs" xml:space="preserve">26,7</text><text x="69.60" y="329.3" text-anchor="end" font-size="10" font-weight="normal" fill="#000" textLength="20.25" lengthAdjust="spacingAndGlyphs" xml:space="preserve">23,3</text><text x="69.60" y="342.3" text-anchor="end" font-size="10" font-weight="normal" fill="#000" textLength="20.25" lengthAdjust="spacingAndGlyphs" xml:space="preserve">20,0</text><text x="69.60" y="354.3" text-anchor="end" font-size="10" font-weight="normal" fill="#000" textLength="20.25" lengthAdjust="spacingAndGlyphs" xml:space="preserve">16,7</text><text x="69.60" y="367.3" text-anchor="end" font-size="10" font-weight="normal" fill="#000" textLength="20.25" lengthAdjust="spacingAndGlyphs" xml:space="preserve">13,3</text><text x="69.60" y="380.3" text-anchor="end" font-size="10" font-weight="normal" fill="#000" textLength="20.25" lengthAdjust="spacingAndGlyphs" xml:space="preserve">10,0</text><text x="69.60" y="393.3" text-anchor="end" font-size="10" font-weight="normal" fill="#000" textLength="14.46" lengthAdjust="spacingAndGlyphs" xml:space="preserve">6,7</text><text x="69.60" y="406.3" text-anchor="end" font-size="10" font-weight="normal" fill="#000" textLength="14.46" lengthAdjust="spacingAndGlyphs" xml:space="preserve">3,3</text><text x="69.60" y="419.3" text-anchor="end" font-size="10" font-weight="normal" fill="#000" textLength="14.46" lengthAdjust="spacingAndGlyphs" xml:space="preserve">0,0</text><text x="69.60" y="432.3" text-anchor="end" font-size="10" font-weight="normal" fill="#000" textLength="17.92" lengthAdjust="spacingAndGlyphs" xml:space="preserve">-3,3</text><text x="81.00" y="436.8" text-anchor="middle" font-size="10" font-weight="normal" fill="#000" textLength="5.90" lengthAdjust="spacingAndGlyphs" xml:space="preserve">0</text><text x="140.17" y="436.8" text-anchor="middle" font-size="10" font-weight="normal" fill="#000" textLength="17.69" lengthAdjust="spacingAndGlyphs" xml:space="preserve">500</text><text x="199.35" y="436.8" text-anchor="middle" font-size="10" font-weight="normal" fill="#000" textLength="23.59" lengthAdjust="spacingAndGlyphs" xml:space="preserve">1000</text><text x="258.52" y="436.8" text-anchor="middle" font-size="10" font-weight="normal" fill="#000" textLength="23.59" lengthAdjust="spacingAndGlyphs" xml:space="preserve">1500</text><text x="317.69" y="436.8" text-anchor="middle" font-size="10" font-weight="normal" fill="#000" textLength="23.59" lengthAdjust="spacingAndGlyphs" xml:space="preserve">2000</text><text x="376.86" y="436.8" text-anchor="middle" font-size="10" font-weight="normal" fill="#000" textLength="23.59" lengthAdjust="spacingAndGlyphs" xml:space="preserve">2500</text><text x="436.04" y="436.8" text-anchor="middle" font-size="10" font-weight="normal" fill="#000" textLength="23.59" lengthAdjust="spacingAndGlyphs" xml:space="preserve">3000</text><text x="495.21" y="436.8" text-anchor="middle" font-size="10" font-weight="normal" fill="#000" textLength="23.59" lengthAdjust="spacingAndGlyphs" xml:space="preserve">3500</text><text x="554.38" y="436.8" text-anchor="middle" font-size="10" font-weight="normal" fill="#000" textLength="23.59" lengthAdjust="spacingAndGlyphs" xml:space="preserve">4000</text><text x="613.55" y="436.8" text-anchor="middle" font-size="10" font-weight="normal" fill="#000" textLength="23.59" lengthAdjust="spacingAndGlyphs" xml:space="preserve">4500</text><text x="672.73" y="436.8" text-anchor="middle" font-size="10" font-weight="normal" fill="#000" textLength="23.59" lengthAdjust="spacingAndGlyphs" xml:space="preserve">5000</text><text x="731.90" y="436.8" text-anchor="middle" font-size="10" font-weight="normal" fill="#000" textLength="23.59" lengthAdjust="spacingAndGlyphs" xml:space="preserve">5500</text><text x="745.25" y="437" text-anchor="start" font-size="11" font-weight="bold" fill="#000" stroke-width="0.1" textLength="38.94" lengthAdjust="spacingAndGlyphs" xml:space="preserve">frame #</text><text transform="translate(44,353.6) rotate(-90)" font-size="11" fill="#000" textLength="21.8" lengthAdjust="spacingAndGlyphs">lead</text><text transform="translate(44,436.3) rotate(-90)" font-size="11" fill="#000" textLength="14.6" lengthAdjust="spacingAndGlyphs">lag</text><text x="737.30" y="292" text-anchor="start" font-size="10.5" font-weight="bold" fill="#000" stroke-width="0.1" textLength="72.67" lengthAdjust="spacingAndGlyphs" xml:space="preserve">CFR FPS: 29,95</text><text x="737.30" y="307" text-anchor="start" font-size="10.5" font-weight="bold" fill="#000" stroke-width="0.1" textLength="116.67" lengthAdjust="spacingAndGlyphs" xml:space="preserve">frame duration:  33,389</text><path d="M750 341H773" stroke="#d99694" stroke-width="2" stroke-opacity="1"/><path d="M750 361H773" stroke="#3c7fd2" stroke-width="2" stroke-opacity="1"/><path d="M751 381.5H772" stroke="#000" stroke-width="1" stroke-opacity="1"/><text x="774.39" y="344" text-anchor="start" font-size="10.5" font-weight="normal" fill="#000" stroke-width="0.1" textLength="72.02" lengthAdjust="spacingAndGlyphs" xml:space="preserve">MP4-dump info</text><text x="774.39" y="364.7" text-anchor="start" font-size="10.5" font-weight="normal" fill="#000" stroke-width="0.1" textLength="58.00" lengthAdjust="spacingAndGlyphs" xml:space="preserve">MKV-vfr info</text><text x="775.40" y="384.8" text-anchor="start" font-size="10.5" font-weight="normal" fill="#000" stroke-width="0.1" textLength="55.27" lengthAdjust="spacingAndGlyphs" xml:space="preserve">CFR must be</text></g><polyline points="78.4,413.5 79.4,413.6 80.4,413.0 81.4,412.5 82.4,411.7 83.4,411.6 84.4,412.2 85.4,411.9 86.4,412.2 87.4,411.7 88.4,411.5 89.4,411.3 90.4,410.0 91.4,410.9 92.4,411.0 93.4,411.0 94.4,409.7 95.4,409.1 96.4,409.4 97.4,409.7 98.4,410.3 99.4,410.3 100.4,410.7 101.4,410.1 102.4,410.4 103.4,410.6 104.4,410.0 105.4,411.2 106.4,411.0 107.4,411.2 108.4,410.3 109.4,409.8 110.4,409.8 111.4,409.9 112.4,410.4 113.4,410.4 114.4,409.9 115.4,409.4 116.4,409.5 117.4,410.6 118.4,409.7 119.4,410.0 120.4,410.3 121.4,409.2 122.4,409.7 123.4,410.7 124.4,409.1 125.4,409.5 126.4,409.8 127.4,409.4 128.4,410.1 129.4,410.0 130.4,409.2 131.4,410.2 132.4,410.5 133.4,410.8 134.4,411.3 135.4,410.8 136.4,410.5 137.4,409.5 138.4,410.2 139.4,409.8 140.4,409.7 141.4,409.2 142.4,409.2 143.4,409.5 144.4,410.7 145.4,409.1 146.4,408.9 147.4,409.8 148.4,410.9 149.4,410.8 150.4,409.3 151.4,408.4 152.4,409.8 153.4,409.7 154.4,409.5 155.4,410.7 156.4,411.3 157.4,411.0 158.4,411.0 159.4,411.1 160.4,411.9 161.4,411.6 162.4,411.5 163.4,411.5 164.4,410.3 165.4,411.5 166.4,411.9 167.4,411.8 168.4,410.3 169.4,410.5 170.4,411.5 171.4,410.4 172.4,410.9 173.4,411.9 174.4,410.9 175.4,412.3 176.4,412.3 177.4,411.9 178.4,412.1 179.4,412.4 180.4,412.2 181.4,412.8 182.4,412.0 183.4,411.8 184.4,412.7 185.4,412.4 186.4,411.8 187.4,412.7 188.4,413.4 189.4,412.5 190.4,411.6 191.4,412.0 192.4,412.2 193.4,412.2 194.4,413.3 195.4,412.2 196.4,413.2 197.4,412.1 198.4,412.0 199.4,412.8 200.4,413.5 201.4,413.6 202.4,413.3 203.4,413.1 204.4,413.1 205.4,413.3 206.4,413.0 207.4,413.2 208.4,413.4 209.4,413.2 210.4,413.5 211.4,413.6 212.4,414.5 213.4,413.8 214.4,413.1 215.4,412.9 216.4,413.0 217.4,413.6 218.4,413.1 219.4,413.3 220.4,414.3 221.4,412.1 222.4,412.0 223.4,412.9 224.4,413.3 225.4,413.4 226.4,413.0 227.4,413.5 228.4,413.5 229.4,413.0 230.4,414.6 231.4,414.0 232.4,413.2 233.4,413.2 234.4,413.1 235.4,413.2 236.4,411.6 237.4,412.3 238.4,413.5 239.4,412.7 240.4,413.0 241.4,413.8 242.4,414.0 243.4,414.5 244.4,412.7 245.4,412.8 246.4,412.9 247.4,413.5 248.4,414.0 249.4,412.0 250.4,413.4 251.4,412.4 252.4,413.3 253.4,412.4 254.4,413.0 255.4,413.9 256.4,413.4 257.4,413.4 258.4,413.8 259.4,413.5 260.4,413.3 261.4,414.2 262.4,414.2 263.4,413.4 264.4,415.0 265.4,413.2 266.4,413.8 267.4,413.3 268.4,413.3 269.4,413.7 270.4,413.5 271.4,413.7 272.4,412.5 273.4,412.0 274.4,413.1 275.4,412.6 276.4,412.3 277.4,411.9 278.4,413.4 279.4,413.7 280.4,414.3 281.4,413.0 282.4,413.1 283.4,412.4 284.4,413.3 285.4,414.2 286.4,413.0 287.4,414.0 288.4,414.1 289.4,413.4 290.4,412.1 291.4,413.5 292.4,413.2 293.4,412.8 294.4,413.2 295.4,413.4 296.4,414.1 297.4,412.9 298.4,413.7 299.4,414.2 300.4,414.4 301.4,413.5 302.4,412.8 303.4,413.6 304.4,413.3 305.4,413.3 306.4,414.0 307.4,413.3 308.4,411.8 309.4,412.3 310.4,411.6 311.4,413.0 312.4,413.2 313.4,412.7 314.4,412.9 315.4,413.5 316.4,413.3 317.4,413.9 318.4,413.3 319.4,413.8 320.4,414.2 321.4,414.5 322.4,413.2 323.4,413.6 324.4,412.1 325.4,412.0 326.4,411.4 327.4,413.0 327.6,281.5 328.6,280.8 329.6,281.2 330.6,281.3 331.6,281.4 332.6,281.1 333.6,281.5 334.6,282.6 335.6,282.0 336.6,282.0 337.6,282.3 338.6,284.1 339.6,284.9 340.6,285.0 341.6,286.1 342.6,285.0 343.6,285.2 344.6,286.3 345.6,286.6 346.6,286.3 347.6,286.7 348.6,286.6 349.6,285.7 350.6,285.2 351.6,285.6 352.6,286.3 353.6,285.2 354.6,284.2 355.6,283.5 356.6,282.8 357.6,283.5 358.6,283.1 359.6,283.9 360.6,282.5 361.6,283.6 362.6,283.5 363.6,282.6 364.6,283.9 365.6,283.8 366.6,282.6 367.6,283.0 368.6,283.8 369.6,283.7 370.6,284.4 371.6,284.6 372.6,284.7 373.6,284.5 374.6,285.1 375.6,284.9 376.6,284.7 377.6,283.1 378.6,284.2 379.6,284.9 380.6,284.3 381.6,283.9 382.6,285.2 383.6,283.5 384.6,284.1 385.6,285.6 386.6,284.2 387.6,284.6 388.6,285.4 389.6,284.6 390.6,284.7 391.6,284.9 392.6,283.9 393.6,284.0 394.6,284.3 395.6,284.7 396.6,284.4 397.6,284.1 398.6,283.5 399.6,283.7 400.6,284.5 401.6,284.4 402.6,283.8 403.6,283.5 404.6,285.5 405.6,285.4 406.6,285.1 407.6,283.0 408.6,284.1 409.6,284.5 410.6,285.3 411.6,284.9 412.6,284.5 413.6,284.6 414.6,283.2 415.6,284.5 416.6,284.5 417.6,283.9 418.6,284.9 419.6,285.6 420.6,284.0 421.6,283.7 422.6,284.2 423.6,284.4 424.6,284.1 425.6,283.6 426.6,285.3 427.6,285.3 428.6,284.0 429.6,283.4 430.6,284.9 431.6,285.2 432.6,285.7 433.6,285.4 434.6,284.3 435.6,284.5 436.6,283.2 437.6,283.5 438.6,284.0 439.6,284.6 440.6,284.1 441.6,284.3 442.6,284.7 443.6,284.9 444.6,285.1 445.6,284.9 446.6,284.6 447.6,285.1 448.6,284.9 449.6,284.3 450.6,284.2 451.6,284.5 452.6,284.6 453.6,284.8 454.6,284.8 455.6,285.0 456.6,284.8 457.6,284.1 458.6,284.9 459.6,285.6 460.6,285.5 461.6,285.1 462.6,285.3 463.6,284.6 464.6,283.8 465.6,284.6 466.6,284.4 467.6,285.3 468.6,284.6 469.6,283.4 470.6,283.9 471.6,285.6 472.6,285.2 473.6,284.4 474.6,284.5 475.6,285.3 476.6,285.6 477.6,285.6 478.6,286.3 479.6,286.2 480.6,285.7 481.6,285.9 482.6,286.6 483.6,286.5 484.6,286.5 485.6,285.2 486.6,285.3 487.6,286.4 488.6,287.0 489.6,288.6 490.6,288.9 491.6,289.1 492.6,288.5 493.6,289.9 494.6,289.7 495.6,288.8 496.6,288.6 497.6,290.0 498.6,288.8 499.6,289.1 500.6,289.2 501.6,288.7 502.6,287.8 503.6,288.3 504.6,288.5 505.6,289.1 506.6,289.2 507.6,288.7 508.6,289.0 509.6,289.0 510.6,288.8 511.6,288.6 512.6,288.3 513.6,288.8 514.6,287.9 515.6,287.9 516.6,288.2 517.6,287.5 518.6,287.8 519.6,287.0 520.6,287.5 521.6,288.4 522.6,288.8 523.6,288.6 524.6,288.4 525.6,287.6 526.6,289.2 527.6,289.1 528.6,289.4 529.6,288.3 530.6,288.3 531.6,287.3 532.6,288.5 533.6,289.1 534.6,287.6 535.6,288.1 536.6,288.7 537.6,287.5 538.6,287.0 539.6,287.2 540.6,287.6 541.6,287.3 542.6,288.0 543.6,288.4 544.6,288.8 545.6,289.0 546.6,289.6 547.6,289.6 548.6,288.1 549.6,288.0 550.6,287.7 551.6,287.5 552.6,288.0 553.6,288.3 554.6,288.7 555.6,287.6 556.6,287.4 557.6,288.0 558.6,288.1 559.6,288.1 560.6,288.3 561.6,287.9 562.6,288.7 563.6,288.7 564.6,288.5 565.6,288.1 566.6,288.2 567.6,286.7 568.6,287.1 569.6,287.9 570.6,287.3 571.6,288.1 572.6,288.4 573.6,287.6 574.6,287.9 575.6,288.0 576.6,288.5 577.6,288.8 578.6,288.6 579.6,288.0 580.6,288.1 581.6,288.3 582.6,289.7 583.6,291.2 584.6,290.3 585.6,288.1 586.6,287.8 587.6,287.7 588.6,287.5 589.6,288.0 590.6,287.9 591.6,288.3 592.6,288.7 593.6,288.3 594.6,289.8 595.6,288.8 596.6,289.2 597.6,288.8 598.6,289.3 599.6,287.3 600.6,287.5 601.6,288.2 602.6,288.7 603.6,290.0 604.6,289.2 605.6,289.5 606.6,289.3 607.6,289.4 608.6,289.1 609.6,288.6 610.6,288.8 611.6,288.0 612.6,289.0 613.6,288.1 614.6,288.5 615.6,289.7 616.6,288.8 617.6,288.6 618.6,289.2 619.6,288.8 620.6,288.1 621.6,288.5 622.6,288.8 623.6,289.1 624.6,288.3 625.6,289.5 626.6,289.9 627.6,289.1 628.6,289.6 629.6,290.4 630.6,291.1 631.6,288.9 632.6,288.9 633.6,288.4 634.6,288.1 635.6,288.9 636.6,289.6 637.6,289.1 638.6,288.5 639.6,289.2 640.6,289.0 641.6,289.1 642.6,289.9 643.6,290.0 644.6,289.1 645.6,290.7 646.6,290.4 647.6,291.0 648.6,290.7 649.6,291.2 650.6,290.7 651.6,292.6 652.6,293.1 653.6,291.7 654.6,291.0 655.6,290.6 656.6,292.2 657.6,291.8 658.6,291.9 659.6,291.8 660.6,291.8 661.6,291.3 662.6,291.7 663.6,291.0 664.6,291.6 665.6,292.1 666.6,292.4 667.6,292.2 668.6,291.7 669.6,292.2 670.6,292.1 671.6,293.3 672.6,293.4 673.6,292.9 674.6,292.6 675.6,292.3 676.6,292.1 677.6,292.5 678.6,292.9 679.6,293.0 680.6,293.0 681.6,293.0 682.6,290.0" fill="none" stroke="#d99694" stroke-width="2.9" stroke-linejoin="miter"/><polyline points="78.4,414.2 327.6,413.2 327.7,283.0 355.4,283.0 355.5,287.9 537.0,285.6 537.1,292.0 583.4,293.7 683.3,285.8" fill="none" stroke="#3c7fd2" stroke-width="2" stroke-linejoin="miter"/><polyline points="78.4,415.5 327.9,415.5 327.9,286.6 683.5,286.6" fill="none" stroke="#000" stroke-width="1.2"/></svg></body></html>
